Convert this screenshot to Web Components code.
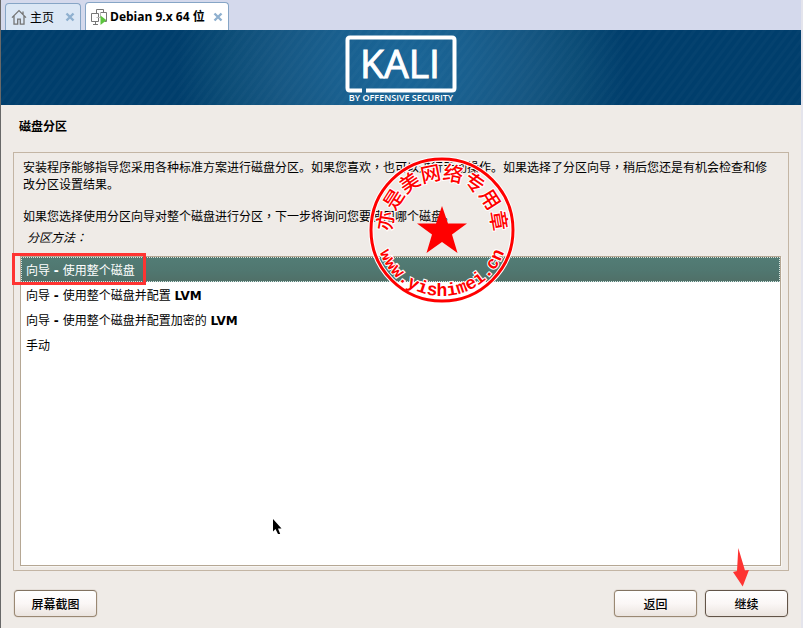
<!DOCTYPE html>
<html lang="zh-CN">
<head>
<meta charset="utf-8">
<title>磁盘分区</title>
<style>
body{margin:0;background:#efebe7;color:#000;font:12px/17px "Noto Sans CJK SC",sans-serif}
</style>
</head>
<body>
<vm-window></vm-window>
<script>
function define(name, html, setup){
  const t=document.createElement('template');
  t.innerHTML=html;
  customElements.define(name,class extends HTMLElement{
    constructor(){
      super();
      this.attachShadow({mode:'open'}).append(t.content.cloneNode(true));
    }
    connectedCallback(){ if(setup) setup(this,this.shadowRoot); }
  });
}

define('vm-tab',`
<style>
:host{display:flex;box-sizing:border-box;height:27px;align-items:center;padding:0 5px;border:1px solid #86a5c6;border-bottom:0;border-radius:4px 4px 0 0;background:#dbe7f5}
:host([active]){height:28px;background:#fff;font-family:"Open Sans","Noto Sans CJK SC",sans-serif;font-weight:700}
button{font:inherit;color:inherit;background:none;border:0;padding:0;display:flex;align-items:center;gap:3px;line-height:18px}
.close{margin-left:11px}
:host([active]) .close{margin-left:8px}
</style>
<button role="tab"><slot name="icon"></slot><slot></slot></button>
<button class="close" aria-label="关闭"><svg width="10" height="10" viewBox="0 0 10 10"><path d="M1.5 1.5l7 7M8.5 1.5l-7 7" stroke="#8fb0cf" stroke-width="2.4"/></svg></button>
`);

define('vm-tabs',`
<style>
:host{display:flex;align-items:flex-end;gap:4px;height:30px;padding-left:4px;background:#d4d9ec}
svg{display:block}
</style>
<vm-tab><svg slot="icon" width="16" height="16" viewBox="0 0 16 16" fill="none" stroke="#747474" stroke-width="1.3"><path d="M1 8.6L8 1.6l7 7M3 7v8.2h3.7v-5h2.6v5H13V7M12 5.2V2.5" stroke-linejoin="miter"/></svg>主页</vm-tab>
<vm-tab active><svg slot="icon" width="16" height="16" viewBox="0 0 16 16" fill="none"><path d="M5.500 4.500v-4h7v3M9.500 3.500h6v9h-2M.500 4.500h7v8h-7zM2 15.500h5M4.500 12.500v3" stroke="#777"/><path d="M5.500 8.500h5M9.500 3.500v5" stroke="#bbb"/><path d="M9.500 6.500v9.500l6-4.750z" fill="#5cc43e"/></svg>Debian 9.x 64 位</vm-tab>
`);

define('kali-banner',`
<style>
:host{display:flex;justify-content:center;height:75px;background:
repeating-linear-gradient(127deg,rgba(255,255,255,.02) 0 2px,transparent 3px 6px,rgba(255,255,255,.02) 7px),
radial-gradient(circle at 50% 50%,#1a6698 0,#195f8e 70px,#165783 125px,#0c4d77 175px,#003e6c 225px)}
svg{display:block;margin-top:5px}
text{fill:#fff;font-family:"Open Sans",sans-serif;text-anchor:middle}
</style>
<svg width="112" height="68" viewBox="0 0 112 68" role="img" aria-label="KALI by Offensive Security">
<path d="M17 55.500H5Q2.500 55.500 2.500 53V5Q2.500 2.500 5 2.500H107Q109.500 2.500 109.500 5V53Q109.500 55.500 107 55.500H21" fill="none" stroke="#fff" stroke-width="4"/>
<text x="55" y="43" font-size="39" stroke="#fff" stroke-width="1">KALI</text>
<text x="56" y="66" font-size="9" font-weight="600">BY OFFENSIVE SECURITY</text>
</svg>
`);

define('option-row',`
<style>
:host{display:block}
button{display:block;box-sizing:border-box;width:100%;height:25px;padding:4px 4px 0;border:1px solid transparent;background:#fff;color:#000;text-align:left;font:12px/19px "DejaVu Sans","Noto Sans CJK SC",sans-serif}
:host([selected]) button{color:#fff;border:1px dotted #d9e5e0;background:linear-gradient(#527c75,#507770 55%,#507068)}
</style>
<button role="option"><slot></slot></button>
`,(host,root)=>root.querySelector('button').setAttribute('aria-selected',host.hasAttribute('selected')));

define('option-list',`
<style>
:host{display:flex;flex-direction:column;flex:1;border:1px solid #b5a794;background:#fff;box-shadow:1px 1px 0 #f7f5f2}
</style>
<div role="listbox" aria-label="分区方法"><slot></slot></div>
`);

define('action-button',`
<style>
:host{display:block}
button{box-sizing:border-box;width:83px;height:27px;padding:0;border:1px solid #9a8873;border-top-color:#827361;border-radius:4px;background:linear-gradient(#fff,#fbf7f6 50%,#ebe4df);font:500 12px/24px "Noto Sans CJK SC",sans-serif;color:#000;box-shadow:0 0 0 1px #e5dfd9}
:host([primary]) button{border-color:#625448}
</style>
<button><slot></slot></button>
`);

define('round-seal',`
<style>
:host{display:block;pointer-events:none}
svg{display:block}
text{fill:#f00;stroke:#fff;stroke-width:2px;paint-order:stroke;text-anchor:middle}
.name{font:500 20px "Noto Sans CJK SC",sans-serif}
.site{font:700 18px "Liberation Mono",monospace}
</style>
<svg width="148" height="148" viewBox="-74 -74 148 148">
<defs><path id="top" d="M-47 17.100A50 50 0 1 1 47 17.100"/><path id="bottom" d="M-65 11.500A66 66 0 0 0 65 11.500"/></defs>
<circle r="71" fill="none" stroke="#fff" stroke-width="5"/>
<text class="name"><textPath href="#top" startOffset="50%">亦是美网络专用章</textPath></text>
<text class="site"><textPath href="#bottom" startOffset="50%">www.yishimei.cn</textPath></text>
<circle r="71" fill="none" stroke="#f00" stroke-width="3"/>
<path d="M0-24L6-6.500H25L10 4.500L15.500 23L0 12L-15.500 23L-10 4.500L-25-6.500H-6Z" fill="#f00"/>
</svg>
`);

define('partition-panel',`
<style>
:host{display:flex;flex-direction:column;flex:1;position:relative;margin:0 12px;padding:5px 7px 4px 6px;border:1px solid #c3b5a4}
p{margin:0 12px 15px 3px}
p+p{margin-bottom:4px}
.centred{font-family:"Noto Sans CJK TC",sans-serif}
.label{margin:0 7px 11px;font-style:italic}
.mark{position:absolute;left:-2px;top:100px;width:128px;height:26px;border:3px solid #fe3432}
.cursor{position:absolute;left:258px;top:366px}
</style>
<p>安装程序能够指导您采用各种标准方案进行磁盘分区。如果您喜欢<span class="centred" lang="zh-TW">，</span>也可以进行手动操作。如果选择了分区向导<span class="centred" lang="zh-TW">，</span>稍后您还是有机会检查和修改分区设置结果。</p>
<p>如果您选择使用分区向导对整个磁盘进行分区<span class="centred" lang="zh-TW">，</span>下一步将询问您要使用哪个磁盘。</p>
<div class="label">分区方法<span class="centred" lang="zh-TW">：</span></div>
<option-list>
<option-row selected>向导 <b>-</b> 使用整个磁盘</option-row>
<option-row>向导 <b>-</b> 使用整个磁盘并配置 <b>LVM</b></option-row>
<option-row>向导 <b>-</b> 使用整个磁盘并配置加密的 <b>LVM</b></option-row>
<option-row>手动</option-row>
</option-list>
<div class="mark"></div>
<svg class="cursor" width="10" height="16" viewBox="0 0 10 16"><path d="M1 0v12.500l2.500-2.500 2.500 5h2.200l-2.200-5.500H9.500z"/></svg>
`);

define('vm-window',`
<style>
:host{display:flex;flex-direction:column;min-height:100vh;box-sizing:border-box;position:relative;border-left:1px solid #686868;border-right:2px solid #e4e4ec}
h1{margin:0;padding:12px 18px 18px;font-size:12px;line-height:17px;font-weight:700}
footer{display:flex;gap:8px;padding:19px 13px 11px}
footer :first-child{margin-right:auto}
round-seal{position:absolute;left:calc(50% - 33px);top:156px}
.arrow{position:absolute;right:51px;bottom:41px}
</style>
<vm-tabs></vm-tabs>
<kali-banner></kali-banner>
<h1>磁盘分区</h1>
<partition-panel></partition-panel>
<footer>
<action-button>屏幕截图</action-button>
<action-button>返回</action-button>
<action-button primary>继续</action-button>
</footer>
<round-seal></round-seal>
<svg class="arrow" width="18" height="39" viewBox="0 0 18 39"><path d="M6.300 0L13 22.500l4-.500L10.700 38.500L1 24l4-1z" fill="#fe3432"/></svg>
`);
</script>
</body>
</html>
